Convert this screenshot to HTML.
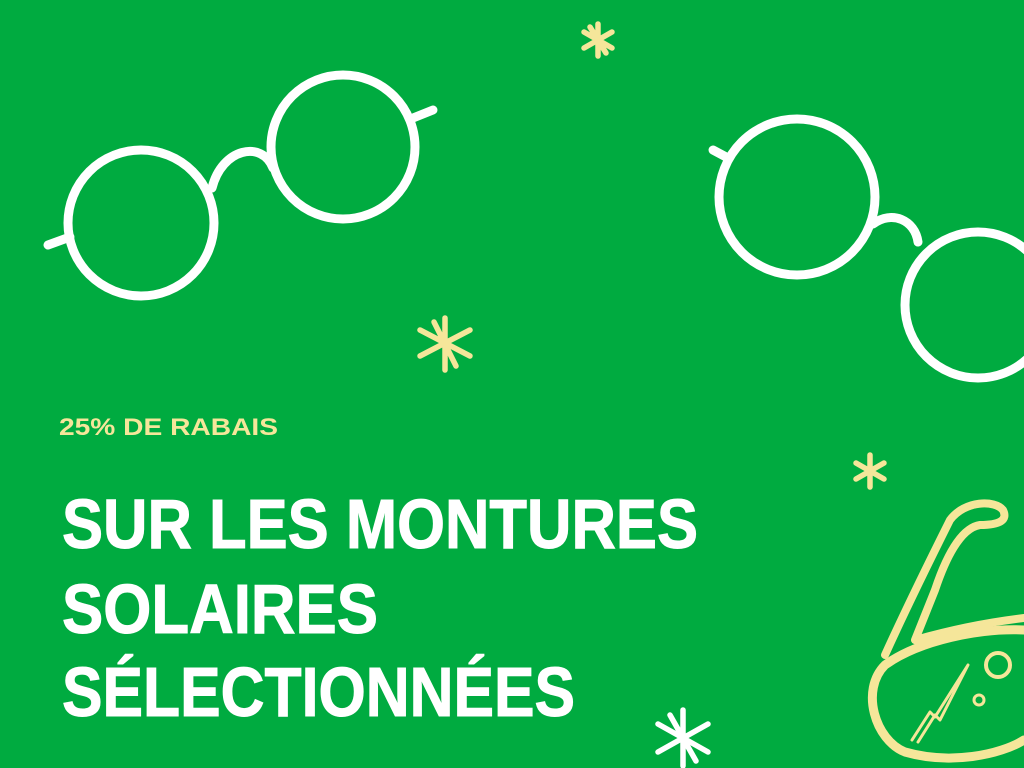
<!DOCTYPE html>
<html><head><style>
html,body{margin:0;padding:0;}
body{width:1024px;height:768px;background:#00ab40;overflow:hidden;}
svg{display:block}
</style></head><body>
<svg width="1024" height="768" viewBox="0 0 1024 768" xmlns="http://www.w3.org/2000/svg">
<g fill="none" stroke="#fff" stroke-width="9" stroke-linecap="round">
<circle cx="141" cy="223" r="73"/>
<circle cx="343" cy="147" r="72"/>
<path d="M212 188 C222 148 262 140 273 168"/>
<path d="M48 245 L70 237"/>
<path d="M413 118 L433 110"/>
<circle cx="797" cy="197" r="78"/>
<circle cx="978" cy="305" r="73"/>
<path d="M873 224 C892 210 915 220 918 242"/>
<path d="M713 150 L728 158"/>
</g>
<g stroke="#f5e69a" stroke-width="5.5" stroke-linecap="round">
<path d="M598 24V56M584 32L612 48M584 48L612 32M590 27L606 53"/>
<path d="M445 318V370M420 330L470 356M420 356L470 330M434 322L456 366"/>
<path d="M870 455V487M856 463L884 479M856 479L884 463"/>
</g>
<g stroke="#fff" stroke-width="5.5" stroke-linecap="round">
<path d="M683 710V766M658 724L708 752M658 752L708 724M670 715L696 761"/>
</g>
<g fill="none" stroke="#f5e69a" stroke-linecap="round" stroke-linejoin="round">
<path stroke-width="8" d="M885 655 C910 600 930 560 950 520 C965 500 995 500 1003 510 C1008 520 1000 525 980 525 C960 528 945 560 935 590 L915 640 C950 630 990 622 1024 618"/>
<path stroke-width="9" d="M1024 630 C980 628 920 640 885 665 C860 690 875 740 905 752 C950 765 1000 755 1024 740"/>
<circle stroke-width="4" cx="998" cy="665" r="12"/>
<circle stroke-width="3" cx="979" cy="700" r="5"/>
<path stroke-width="3" d="M912 740 L930 712 L935 717 L968 665 L940 720 L935 715 L918 742"/>
</g>
<g font-family="Liberation Sans, sans-serif" font-weight="bold">
<text x="59" y="435" font-size="24" fill="#f5e69a" textLength="219" lengthAdjust="spacingAndGlyphs">25% DE RABAIS</text>
<g fill="#fff" font-size="70" stroke="#fff" stroke-width="1">
<text x="62" y="548" textLength="636" lengthAdjust="spacingAndGlyphs">SUR LES MONTURES</text>
<text x="62" y="633" textLength="316" lengthAdjust="spacingAndGlyphs">SOLAIRES</text>
<text x="62" y="716" textLength="513" lengthAdjust="spacingAndGlyphs">SÉLECTIONNÉES</text>
</g>
</g>
</svg>
</body></html>
